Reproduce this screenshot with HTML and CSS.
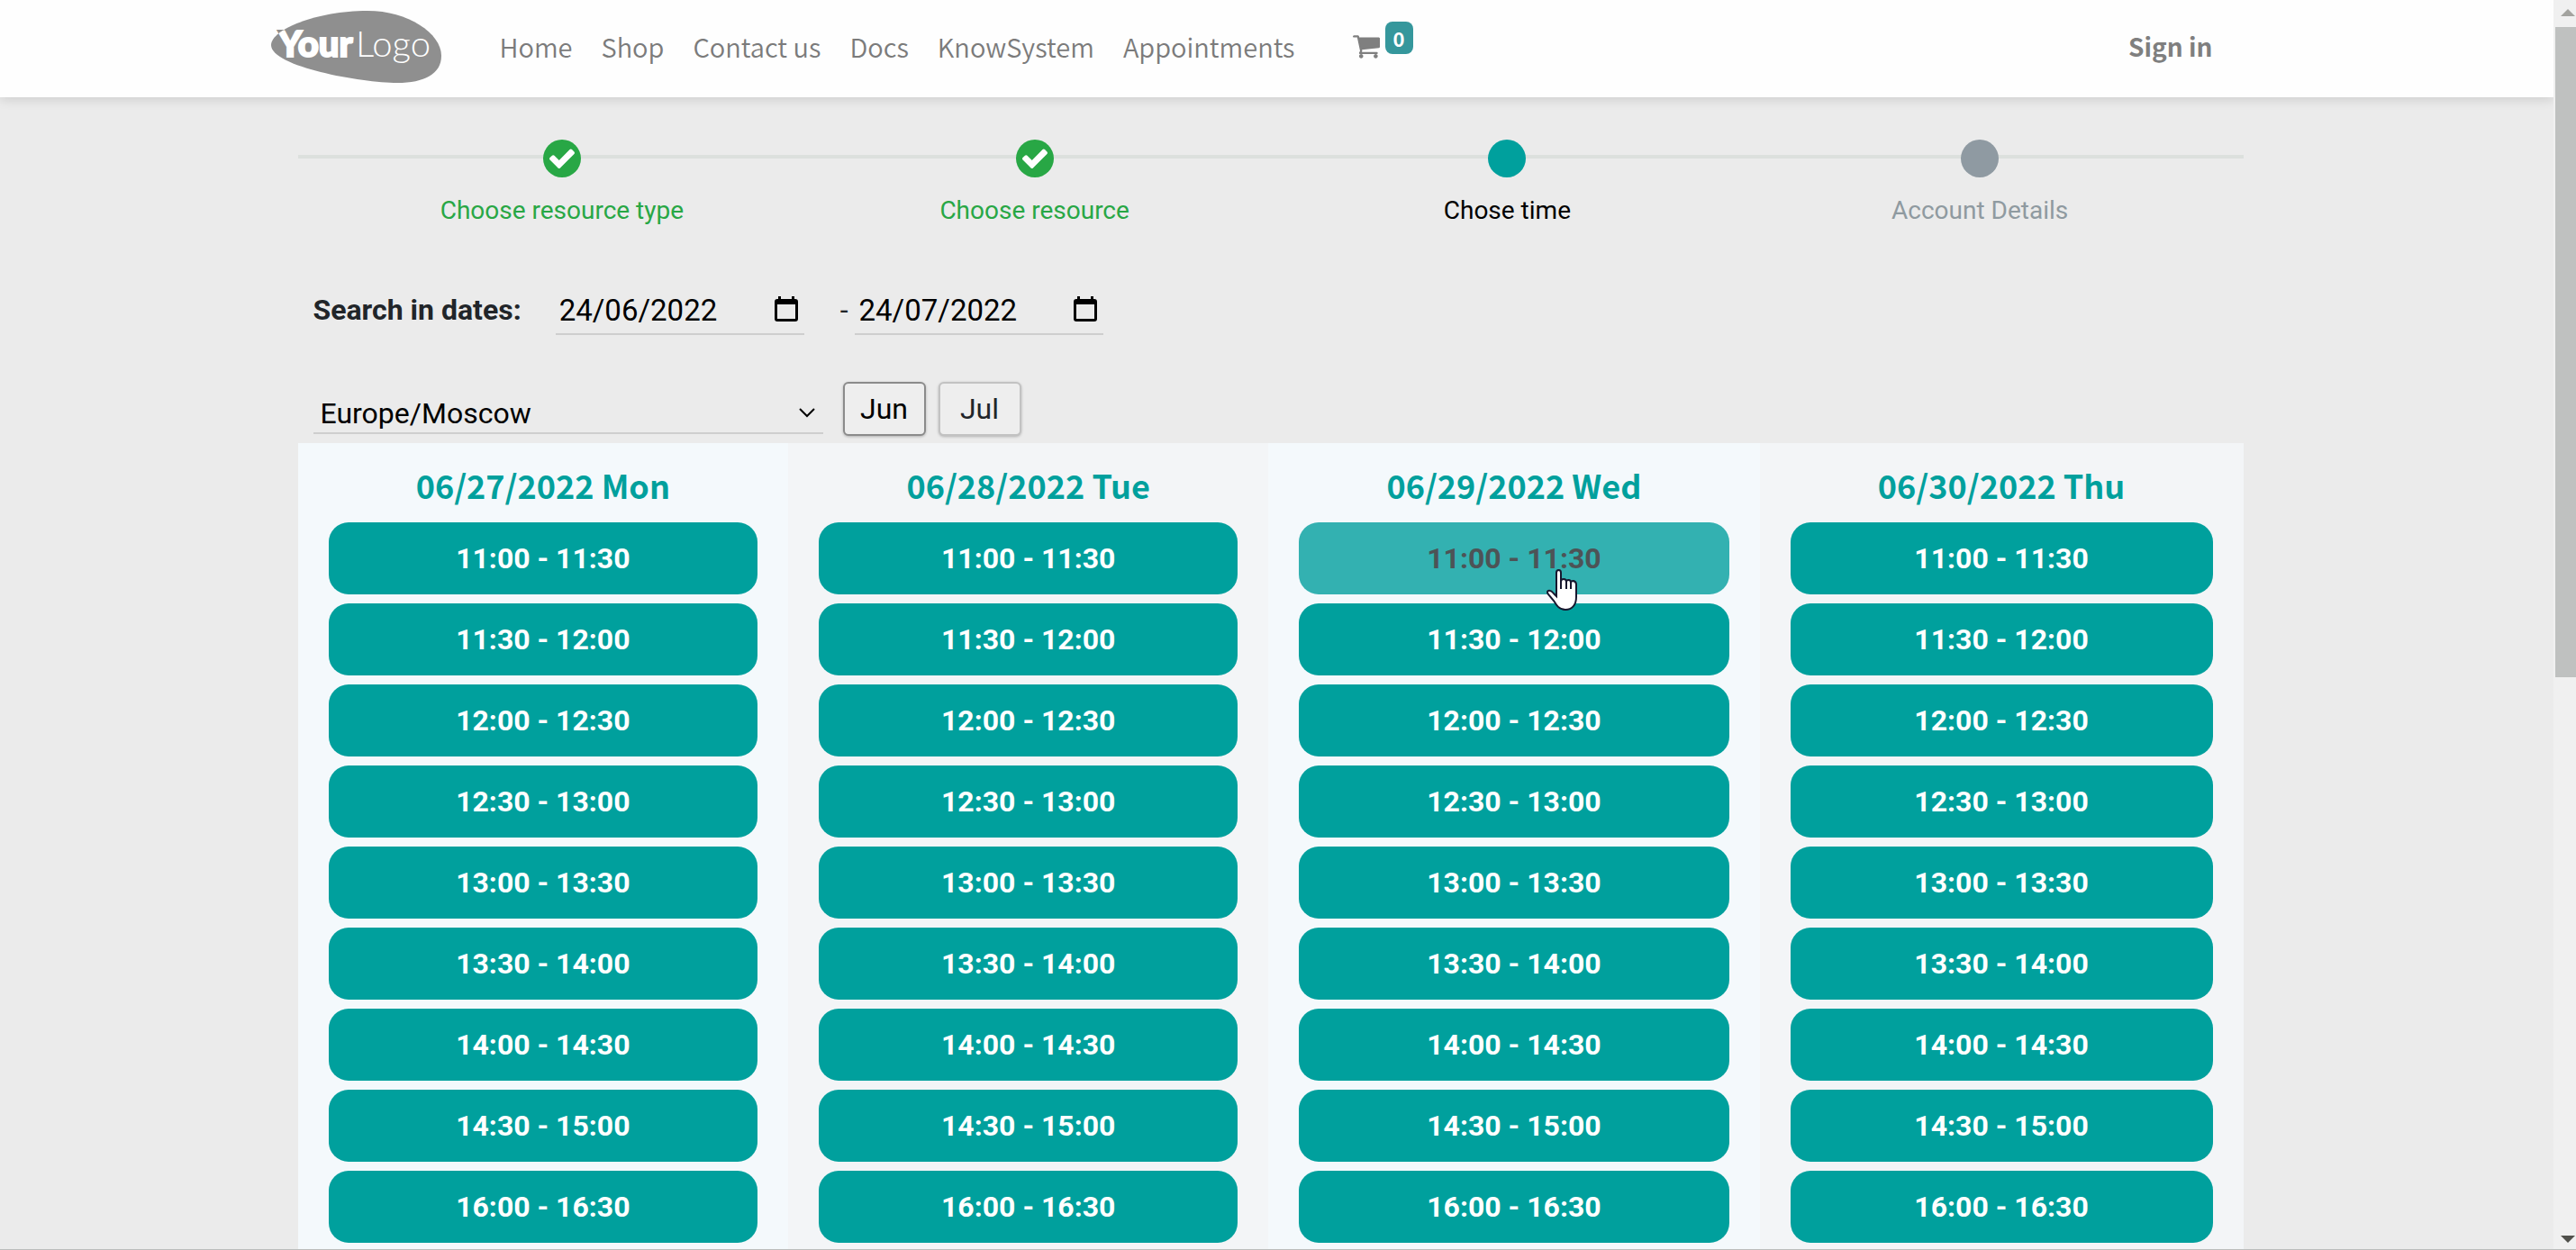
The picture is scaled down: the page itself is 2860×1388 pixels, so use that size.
FILE: index.html
```html
<!DOCTYPE html>
<html lang="en-GB">
<head>
<meta charset="utf-8">
<title>Appointments</title>
<link rel="stylesheet" href="styles.css">
</head>
<body>
<div class="page">
  <header class="navbar">
    <div class="navbar-inner">
      <a class="logo" href="#" aria-label="Your Logo">
        <svg viewBox="0 0 190 80" width="190" height="80">
          <defs>
            <clipPath id="blob"><path d="M0 38C0 21 50 0 107 0C152 0 189 25 189 50C189 70 170 80 140 80C100 80 0 62 0 38Z"/></clipPath>
          </defs>
          <text class="logo-bold logo-gray" x="8" y="51">Your</text>
          <path class="logo-gray" d="M0 38C0 21 50 0 107 0C152 0 189 25 189 50C189 70 170 80 140 80C100 80 0 62 0 38Z"/>
          <g clip-path="url(#blob)">
            <text class="logo-bold" x="8" y="51">Your</text>
            <text class="logo-light" x="94" y="51">Logo</text>
          </g>
        </svg>
      </a>
      <nav class="menu">
        <a href="#">Home</a>
        <a href="#">Shop</a>
        <a href="#">Contact us</a>
        <a href="#">Docs</a>
        <a href="#">KnowSystem</a>
        <a href="#">Appointments</a>
      </nav>
      <a class="cart" href="#" aria-label="Cart">
        <svg viewBox="0 256 1664 1408" width="30" height="26"><path d="M640 1536q0 52-38 90t-90 38-90-38-38-90 38-90 90-38 90 38 38 90zm896 0q0 52-38 90t-90 38-90-38-38-90 38-90 90-38 90 38 38 90zm128-1088v512q0 24-16.500 42.500t-40.500 21.500l-1044 122q13 60 13 70 0 16-24 64h920q26 0 45 19t19 45-19 45-45 19h-1024q-26 0-45-19t-19-45q0-11 8-31.500t16-36 21.500-40 15.500-29.500l-177-823h-204q-26 0-45-19t-19-45 19-45 45-19h256q16 0 28.500 6.500t19.500 15.500 13 24.500 8 26 5.500 29.500 4.500 26h1201q26 0 45 19t19 45z"/></svg>
        <span class="badge">0</span>
      </a>
      <a class="signin" href="#">Sign in</a>
    </div>
  </header>

  <main class="content">
    <ol class="steps">
      <li class="step done"><span class="dot"><svg viewBox="121 300 1550 1222" width="28" height="22"><path d="M1671 566q0 40-28 68l-724 724-136 136q-28 28-68 28t-68-28l-136-136-362-362q-28-28-28-68t28-68l136-136q28-28 68-28t68 28l294 295 656-657q28-28 68-28t68 28l136 136q28 28 28 68z"/></svg></span>Choose resource type</li>
      <li class="step done"><span class="dot"><svg viewBox="121 300 1550 1222" width="28" height="22"><path d="M1671 566q0 40-28 68l-724 724-136 136q-28 28-68 28t-68-28l-136-136-362-362q-28-28-28-68t28-68l136-136q28-28 68-28t68 28l294 295 656-657q28-28 68-28t68 28l136 136q28 28 28 68z"/></svg></span>Choose resource</li>
      <li class="step current"><span class="dot"></span>Chose time</li>
      <li class="step"><span class="dot"></span>Account Details</li>
    </ol>

    <form class="filters">
      <div class="dates">
        <label class="dates-label" for="from">Search in dates:</label>
        <span class="date">
          <input id="from" type="text" value="24/06/2022">
          <button type="button" aria-label="Pick start date"><svg viewBox="0 0 26 28" width="26" height="28"><path d="M4 0h3v3h12V0h3v3h1a3 3 0 0 1 3 3v19a3 3 0 0 1-3 3H3a3 3 0 0 1-3-3V6a3 3 0 0 1 3-3h1zM3 9v16h20V9z"/></svg></button>
        </span>
        <label class="dash" for="to">-</label>
        <span class="date">
          <input id="to" type="text" value="24/07/2022">
          <button type="button" aria-label="Pick end date"><svg viewBox="0 0 26 28" width="26" height="28"><path d="M4 0h3v3h12V0h3v3h1a3 3 0 0 1 3 3v19a3 3 0 0 1-3 3H3a3 3 0 0 1-3-3V6a3 3 0 0 1 3-3h1zM3 9v16h20V9z"/></svg></button>
        </span>
      </div>
      <div class="zone-row">
        <span class="zone">
          <select aria-label="Time zone"><option>Europe/Moscow</option></select>
          <svg class="chevron" viewBox="0 0 18 11" width="18" height="11"><path d="M1 1l8 8 8-8"/></svg>
        </span>
        <button class="month active" type="button">Jun</button>
        <button class="month" type="button">Jul</button>
      </div>
    </form>

    <div class="days">
      <section class="day">
        <h2>06/27/2022 Mon</h2>
        <button>11:00 - 11:30</button><button>11:30 - 12:00</button><button>12:00 - 12:30</button><button>12:30 - 13:00</button><button>13:00 - 13:30</button><button>13:30 - 14:00</button><button>14:00 - 14:30</button><button>14:30 - 15:00</button><button>16:00 - 16:30</button>
      </section>
      <section class="day">
        <h2>06/28/2022 Tue</h2>
        <button>11:00 - 11:30</button><button>11:30 - 12:00</button><button>12:00 - 12:30</button><button>12:30 - 13:00</button><button>13:00 - 13:30</button><button>13:30 - 14:00</button><button>14:00 - 14:30</button><button>14:30 - 15:00</button><button>16:00 - 16:30</button>
      </section>
      <section class="day">
        <h2>06/29/2022 Wed</h2>
        <button class="hovered">11:00 - 11:30<svg class="pointer" viewBox="0 0 34 46" width="34" height="46"><path d="M11 30V4Q11 1 13.500 1T16 4V14Q16 11 19 11T22 14Q22 12 24.500 12T27 15Q27 13 30 13Q33 14 33 17V31C33 40 28 45 21 45C14 45 11 40 8 35L2 28Q0 25 2 24Q5 23 8 27Z"/><path d="M16 13V22M22 13V22M27 14V22"/></svg></button><button>11:30 - 12:00</button><button>12:00 - 12:30</button><button>12:30 - 13:00</button><button>13:00 - 13:30</button><button>13:30 - 14:00</button><button>14:00 - 14:30</button><button>14:30 - 15:00</button><button>16:00 - 16:30</button>
      </section>
      <section class="day">
        <h2>06/30/2022 Thu</h2>
        <button>11:00 - 11:30</button><button>11:30 - 12:00</button><button>12:00 - 12:30</button><button>12:30 - 13:00</button><button>13:00 - 13:30</button><button>13:30 - 14:00</button><button>14:00 - 14:30</button><button>14:30 - 15:00</button><button>16:00 - 16:30</button>
      </section>
    </div>
  </main>
</div>
<div class="scrollbar" aria-hidden="true">
  <svg viewBox="0 0 16 8" width="16" height="8" fill="#a3a39f"><path d="M8 0l8 8H0z"/></svg>
  <div class="track"><div class="thumb"></div></div>
  <svg viewBox="0 0 16 8" width="16" height="8" fill="#50504b"><path d="M0 0h16L8 8z"/></svg>
</div>
</body>
</html>
```
FILE: styles.css
```css
* { box-sizing: border-box; }

body {
  margin: 0;
  height: 100vh;
  overflow: hidden;
  display: flex;
  background: #ebebeb;
  border-bottom: 1px solid #bbbdbc;
  font: 32px/48px Roboto, sans-serif;
  color: #212529;
}

a { color: inherit; text-decoration: none; }
button, input, select { font: inherit; color: inherit; border: 0; background: none; padding: 0; margin: 0; }
svg { display: block; flex: none; }

.page { flex: 1; min-width: 0; overflow: hidden; }

/* Top bar */
.navbar {
  position: relative;
  padding-right: 14px;
  background: #fefefe;
  box-shadow: 0 2px 12px rgba(0, 0, 0, .14);
}
.navbar-inner {
  display: flex;
  align-items: center;
  max-width: 2220px;
  height: 108px;
  margin: 0 auto;
  padding: 0 64px 4px 0;
  font-family: "Noto Sans CJK SC", sans-serif;
  font-size: 28px;
  line-height: 40px;
  color: #7b7b7b;
}
.logo-gray { fill: #8f8f8f; }
.logo text { font-family: Lato, sans-serif; font-size: 40px; fill: #fff; }
.logo text.logo-gray { fill: #8f8f8f; stroke: #8f8f8f; }
.logo .logo-bold { font-weight: 900; stroke: #fff; stroke-width: 2; }
.logo .logo-light { font-weight: 300; }
.menu { display: flex; gap: 32px; margin: 0 0 2px 64px; font-size: 29px; font-weight: 350; }
.cart { display: flex; align-items: center; gap: 6px; margin-left: 64px; fill: #7f7f7f; }
.badge {
  margin-bottom: 20px;
  padding: 0 9px;
  border-radius: 8px;
  background: #35979c;
  color: #fff;
  font-size: 22px;
  font-weight: 700;
  line-height: 36px;
}
.signin { margin: 0 0 2px auto; font-weight: 700; color: #7f7f7f; }

/* Progress steps */
.content { max-width: 2174px; margin: 0 auto; padding: 46px 14px 0 0; }
.steps {
  display: flex;
  margin: 0;
  padding: 1px 30px 0 31px;
  list-style: none;
  font-size: 28px;
  line-height: 40px;
  color: #8f9aa0;
  background: linear-gradient(#dce0dd, #dce0dd) 0 18px / 100% 4px no-repeat;
}
.step { flex: 1; display: flex; flex-direction: column; align-items: center; gap: 17px; }
.dot { display: grid; place-items: center; width: 42px; height: 42px; border-radius: 50%; background: #8f9aa2; fill: #fff; }
.done { color: #28a745; }
.done .dot { background: #28a745; }
.current { color: #000; }
.current .dot { background: #00a09d; }

/* Filters */
.filters { padding: 62px 16px 0 17px; }
.dates { display: flex; align-items: center; }
.dates-label { font-weight: 700; margin-right: 38px; }
.date {
  display: flex;
  align-items: center;
  justify-content: space-between;
  width: 276px;
  height: 56px;
  padding: 0 7px 0 4px;
  border-bottom: 2px solid #cecece;
  color: #000;
}
.date input { width: 200px; height: 50px; padding-top: 2px; font-size: 33px; }
.dash { margin-left: 40px; padding-right: 8px; }
.zone-row { display: flex; align-items: flex-end; gap: 14px; margin-top: 52px; padding-bottom: 8px; }
.zone { display: flex; align-items: flex-end; width: 566px; height: 54px; margin: 0 8px 2px 0; border-bottom: 2px solid #cecece; color: #000; }
.zone select { flex: 1; height: 48px; padding: 3px 0 0 8px; appearance: none; }
.chevron { margin: 0 9px 16px 0; fill: none; stroke: #000; stroke-width: 2; }
.month {
  width: 92px;
  height: 60px;
  border: 2px solid #c2c2c2;
  border-radius: 6px;
  background: #eeeeee;
  box-shadow: 0 1px 3px rgba(0, 0, 0, .25);
}
.month.active { border-color: #8b8b8b; color: #000; }

/* Time slots */
.days { display: grid; grid-template-columns: repeat(4, auto); }
.day { display: flex; flex-direction: column; gap: 10px; padding: 16px 34px; background: #f3f5f7; }
.day:nth-child(odd) { background: #f4f9fc; }
.day h2 {
  margin: 0 0 2px;
  font: 700 36px/60px "Noto Sans CJK SC", sans-serif;
  text-align: center;
  color: #00a09d;
}
.day button {
  position: relative;
  height: 80px;
  border-radius: 22px;
  background: #00a09d;
  color: #fff;
  font-weight: 700;
}
.day button.hovered { background: #33b1b1; color: #4d5356; }
.pointer {
  position: absolute;
  z-index: 1;
  left: calc(50% + 36px);
  top: 52px;
  fill: #fff;
  stroke: #17172e;
  stroke-width: 2;
}

/* Window scrollbar */
.scrollbar { display: flex; flex-direction: column; align-items: center; width: 25px; padding: 10px 0 7px 8px; background: #f0f0f0; }
.scrollbar svg { align-self: flex-start; }
.track { flex: 1; width: 23px; margin: 12px 0 12px -6px; }
.thumb { height: 54.3%; background: #bfc1c0; }
```
